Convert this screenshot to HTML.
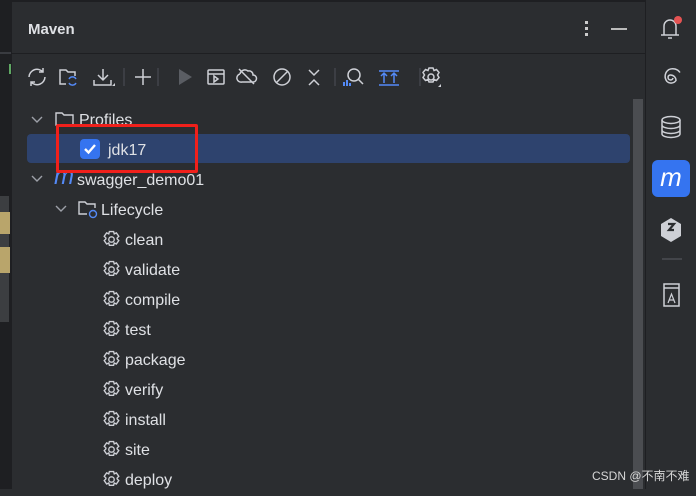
<!DOCTYPE html>
<html><head><style>
body{margin:0;width:696px;height:489px;background:#2b2d30;overflow:hidden;position:relative;font-family:"Liberation Sans","Noto Sans CJK SC",sans-serif;color:#dfe1e5}
.abs{position:absolute}
.row{position:absolute;height:30px;line-height:30px;font-size:16px;color:#dfe1e5;white-space:nowrap}
.g{position:absolute;left:102px;width:19px;height:19px}
.t{position:absolute;left:125px}
svg{display:block}
</style></head><body>
<div class="abs" style="left:0;top:0;width:11px;height:489px;background:#1e1f22"></div>
<div class="abs" style="left:0;top:52px;width:11px;height:2px;background:#393b40"></div>
<div class="abs" style="left:9px;top:64px;width:3px;height:10px;background:#5fa863"></div>
<div class="abs" style="left:0;top:196px;width:9px;height:126px;background:#3c3e41"></div>
<div class="abs" style="left:0;top:212px;width:10px;height:22px;background:#b9a56b"></div>
<div class="abs" style="left:0;top:247px;width:10px;height:26px;background:#b9a56b"></div>
<div class="abs" style="left:11px;top:0;width:1px;height:489px;background:#1e1f22"></div>
<div class="abs" style="left:12px;top:0;width:633px;height:2px;background:#1e1f22"></div>
<div class="abs" style="left:28px;top:21px;font-size:15px;font-weight:bold;color:#dfe1e5">Maven</div>
<div class="abs" style="left:585px;top:21px;width:3px;height:3px;background:#ccc;box-shadow:0 6px #ccc,0 12px #ccc"></div>
<div class="abs" style="left:611px;top:28px;width:16px;height:2px;background:#bbb"></div>
<div class="abs" style="left:12px;top:53px;width:633px;height:1px;background:#1e1f22"></div>
<svg class="abs" style="left:26px;top:66px" width="420" height="22" fill="none" stroke="#ced0d6" stroke-width="1.5">
 <path d="M3 11a8 8 0 0 1 14-5M19 11a8 8 0 0 1-14 5M17 2v4h-4M5 20v-4h4"/>
 <path d="M40 18h-6V4h6l2 2h7v4"/><path d="M43 13a4 4 0 0 1 7 0M50 17a4 4 0 0 1-7 0" stroke="#548af7"/>
 <path d="M77 3v11M72 9l5 5 5-5M68 14v5h17v-5"/><path d="M86 20l3-3v3z" fill="#ced0d6" stroke="none"/>
 <path d="M98 2v18" stroke="#43454a"/>
 <path d="M117 3v16M109 11h16"/>
 <path d="M132 2v18" stroke="#43454a"/>
 <path d="M153 3l13 8-13 8z" fill="#5a5d63" stroke="none"/>
 <rect x="182" y="4" width="16" height="14" rx="1"/><path d="M182 8h16M188 10v6l4-3z"/>
 <path d="M214 8a5 5 0 0 1 8-3 4 4 0 0 1 5 4 3 3 0 0 1 0 7h-11a4 4 0 0 1-2-8M213 3l15 15"/>
 <circle cx="256" cy="11" r="8"/><path d="M250 17l12-12"/>
 <path d="M283 4l5 5 5-5M283 19l5-5 5 5"/>
 <path d="M309 2v18" stroke="#43454a"/>
 <circle cx="328" cy="9" r="6"/><path d="M332 13l5 5"/><path d="M318 20v-4M321 20v-6M324 20v-3" stroke="#548af7" stroke-width="2"/>
 <path d="M353 5h20M353 19h20M358 17v-10M355 10l3-3 3 3M368 17v-10M365 10l3-3 3 3" stroke="#548af7"/>
 <path d="M394 2v18" stroke="#43454a"/>
 <circle cx="405" cy="11" r="3"/><path d="M403 2h4l1 2.5 2.5-1 2.5 3-1.5 2.5 1.5 2.5-2.5 3-2.5-1-1 2.5h-4l-1-2.5-2.5 1-2.5-3 1.5-2.5-1.5-2.5 2.5-3 2.5 1z"/><path d="M412 21l3-3v3z" fill="#ced0d6" stroke="none"/>
</svg>
<div class="abs" style="left:633px;top:99px;width:10px;height:390px;background:#4b4d51"></div>
<div class="abs" style="left:645px;top:0;width:1px;height:489px;background:#1e1f22"></div>
<svg class="abs" style="left:658px;top:14px" width="28" height="300" fill="none" stroke="#ced0d6" stroke-width="1.5">
 <path d="M3 21h18M6 21v-9a6 6 0 0 1 12 0v9M10 24h4"/><circle cx="20" cy="6" r="4" fill="#e55353" stroke="none"/>
 <path d="M15 64a2.5 2.5 0 1 1-3-3a5.5 5.5 0 0 1 6 5.5a6 6 0 0 1-9 1a8 8 0 0 1 2-12a9 9 0 0 1 11 3"/>
 <ellipse cx="13" cy="106" rx="9" ry="3.5"/><path d="M4 106v14a9 3.5 0 0 0 18 0v-14M4 111a9 3.5 0 0 0 18 0M4 116a9 3.5 0 0 0 18 0"/>
 <path d="M13 204l10 6v12l-10 6-10-6v-12z" fill="#ced0d6" stroke="none"/><path d="M10 210h6l-5 6h5" stroke="#2b2d30" stroke-width="2.2"/>
 <path d="M4 245h20" stroke="#43454a" stroke-width="2"/>
 <path d="M6 270h15v22h-15zM6 274h15"/><path d="M10 289l3.5-9 3.5 9M11 286h5" stroke-width="1.2"/>
</svg>
<div class="abs" style="left:652px;top:160px;width:38px;height:37px;border-radius:6px;background:#3574f0;color:#fff;font-style:italic;font-size:26px;text-align:center;line-height:34px">m</div>
<div class="abs" style="left:27px;top:134px;width:603px;height:29px;border-radius:4px;background:#2e436e"></div>
<div class="row" style="top:106px;left:0;width:600px">
 <svg class="abs" style="left:31px;top:10px" width="12" height="8" fill="none" stroke="#9da0a8" stroke-width="1.4"><path d="M1 1l5 5 5-5"/></svg>
 <svg class="abs" style="left:55px;top:5px" width="20" height="16" fill="none" stroke="#ced0d6" stroke-width="1.4"><path d="M1 14V2h6l2 2h9v10z"/></svg>
 <span class="t" style="left:79px">Profiles</span></div>
<div class="abs" style="left:80px;top:139px;width:20px;height:20px;border-radius:4px;background:#3574f0"></div>
<svg class="abs" style="left:80px;top:139px" width="20" height="20" fill="none" stroke="#fff" stroke-width="2.4"><path d="M5 10l3.5 3.5L15 6"/></svg>
<div class="row" style="top:136px;left:0"><span class="t" style="left:108px">jdk17</span></div>
<div class="row" style="top:166px;left:0">
 <svg class="abs" style="left:31px;top:9px" width="12" height="8" fill="none" stroke="#9da0a8" stroke-width="1.4"><path d="M1 1l5 5 5-5"/></svg>
 <span class="abs" style="left:54px;top:-4px;font-size:24px;font-style:italic;color:#548af7">m</span>
 <span class="t" style="left:77px">swagger_demo01</span></div>
<div class="row" style="top:196px;left:0">
 <svg class="abs" style="left:55px;top:9px" width="12" height="8" fill="none" stroke="#9da0a8" stroke-width="1.4"><path d="M1 1l5 5 5-5"/></svg>
 <svg class="abs" style="left:78px;top:4px" width="22" height="20" fill="none" stroke="#ced0d6" stroke-width="1.4"><path d="M9 14H1V2h6l2 2h8v4"/><circle cx="15" cy="14" r="3.5" stroke="#548af7"/></svg>
 <span class="t" style="left:101px">Lifecycle</span></div>
<div id="lc"></div>
<script>
var n=["clean","validate","compile","test","package","verify","install","site","deploy"],h="";
n.forEach(function(s,i){var y=226+i*30;h+='<div class="row" style="top:'+y+'px;left:0;width:300px"><svg class="g" style="top:4px" viewBox="0 0 18 18" fill="none" stroke="#ced0d6" stroke-width="1.3"><path d="M7 1.5h4l.6 2.2 2-1 2.3 3.3-1.6 1.6v.8l1.6 1.6-2.3 3.3-2-1-.6 2.2H7l-.6-2.2-2 1L2.1 10l1.6-1.6v-.8L2.1 6l2.3-3.3 2 1z"/><circle cx="9" cy="9" r="2.6"/></svg><span class="t">'+s+'</span></div>';});
document.getElementById("lc").innerHTML=h;
</script>
<div class="abs" style="left:56px;top:124px;width:136px;height:43px;border:3px solid #f0201b;border-radius:2px"></div>
<div class="abs" style="left:592px;top:467px;font-size:12px;color:#d6d6d6">CSDN @不南不难</div>
</body></html>
